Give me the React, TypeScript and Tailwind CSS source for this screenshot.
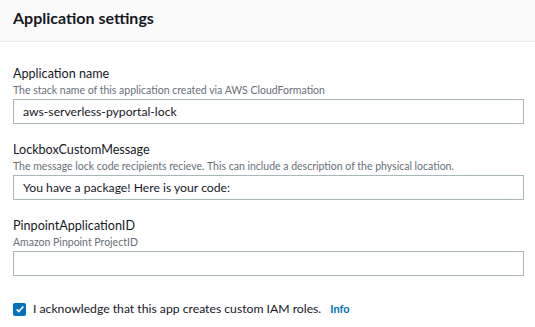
const fields = [
  {
    label: 'Application name',
    hint: 'The stack name of this application created via AWS CloudFormation',
    value: 'aws-serverless-pyportal-lock',
  },
  {
    label: 'LockboxCustomMessage',
    hint: 'The message lock code recipients recieve. This can include a description of the physical location.',
    value: 'You have a package! Here is your code:',
  },
  {
    label: 'PinpointApplicationID',
    hint: 'Amazon Pinpoint ProjectID',
    value: '',
  },
]

const Field = ({ label, hint, value }: { label: string; hint: string; value: string }) => (
  <div className="flex flex-col">
    <label className="text-[12.6px] leading-[18px] text-[#16191f]">{label}</label>
    <span className="text-[10.5px] leading-[14px] text-[#687078]">{hint}</span>
    <input
      defaultValue={value}
      className="mt-[2px] h-[25px] w-full border border-[#aab7b8] bg-white px-[9px] text-[12.2px] text-[#16191f] outline-none"
    />
  </div>
)

export default function App() {
  return (
    <div className="h-[327px] w-[535px] overflow-hidden bg-white font-['Lato',sans-serif]">
      <div className="flex h-[42px] items-center border-b border-[#eaeded] bg-[#fafafa] px-[13px] pb-[5px]">
        <h2 className="text-[16px] font-bold text-[#16191f]">Application settings</h2>
      </div>
      <div className="flex w-[524px] flex-col gap-[17px] pl-[13px] pt-[23px]">
        {fields.map((f) => (
          <Field key={f.label} {...f} />
        ))}
        <label className="mt-[6px] flex h-[20px] items-center text-[12.2px] text-[#16191f]">
          <span className="flex h-[13px] w-[13px] items-center justify-center rounded-[2px] bg-[#0073bb]">
            <svg viewBox="0 0 12 12" className="h-[10px] w-[10px]" fill="none" stroke="white" strokeWidth="2">
              <path d="M2 6.5l2.5 2.5L10 3" />
            </svg>
          </span>
          <span className="ml-[7px]">I acknowledge that this app creates custom IAM roles.</span>
          <a href="#" className="ml-[9px] text-[11px] font-bold text-[#0073bb]">Info</a>
        </label>
      </div>
    </div>
  )
}
